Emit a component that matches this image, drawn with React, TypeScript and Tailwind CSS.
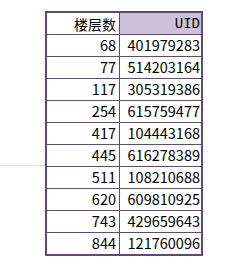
const rows: [number, string][] = [
  [68, "401979283"],
  [77, "514203164"],
  [117, "305319386"],
  [254, "615759477"],
  [417, "104443168"],
  [445, "616278389"],
  [511, "108210688"],
  [620, "609810925"],
  [743, "429659643"],
  [844, "121760096"],
];

export default function App() {
  return (
    <div className="relative w-[247px] h-[264px] bg-white pl-[45px] pt-[11px] font-['Noto_Sans_CJK_SC',sans-serif] text-[14.5px] text-black">
      {/* stray selection line left of the sheet */}
      <div className="absolute left-0 top-[165px] w-[45px] h-px bg-[#e4ddee]" />
      <div className="w-[158px] border-2 border-[#60497a]">
        <div className="flex h-[22px] border-b border-[#60497a]">
          <div className="w-[73px] border-r border-[#60497a] flex items-center justify-end pr-[3px] leading-none text-[14px]">
            楼层数
          </div>
          <div className="flex-1 bg-[#ccc0da] flex items-center justify-end pr-[1px] leading-none text-[14px] font-['Liberation_Mono',monospace]">
            UID
          </div>
        </div>
        {rows.map(([floor, uid], i) => (
          <div
            key={uid}
            className={
              i === rows.length - 1
                ? "flex h-[21px]"
                : "flex h-[22px] border-b border-[#60497a]"
            }
          >
            <div className="w-[73px] border-r border-[#60497a] flex items-center justify-end pr-[3px] leading-none">
              {floor}
            </div>
            <div className="flex-1 flex items-center justify-end pr-[1px] leading-none">
              {uid}
            </div>
          </div>
        ))}
      </div>
    </div>
  );
}
